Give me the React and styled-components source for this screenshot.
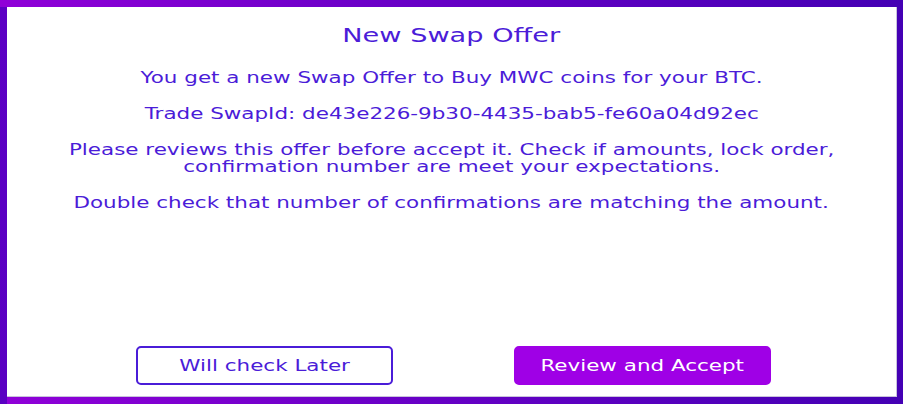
import React from "react";
import styled, { createGlobalStyle } from "styled-components";

const GlobalStyle = createGlobalStyle`
  html, body {
    margin: 0;
    padding: 0;
    width: 903px;
    height: 404px;
    overflow: hidden;
  }
  body {
    font-family: "DejaVu Sans", "Liberation Sans", sans-serif;
  }
`;

export default function App() {
  return (
    <>
      <GlobalStyle />
      <Frame>
        <Panel>
          <Content>
            <Title>
              <Wide>New Swap Offer</Wide>
            </Title>
            <Message>
              <Wide>You get a new Swap Offer to Buy MWC coins for your BTC.</Wide>
            </Message>
            <Message>
              <Wide>Trade SwapId: de43e226-9b30-4435-bab5-fe60a04d92ec</Wide>
            </Message>
            <Message>
              <Wide>
                Please reviews this offer before accept it. Check if amounts, lock order,
                <br />
                confirmation number are meet your expectations.
              </Wide>
            </Message>
            <Message>
              <Wide>Double check that number of confirmations are matching the amount.</Wide>
            </Message>
          </Content>
          <Actions>
            <Button>
              <Wide>Will check Later</Wide>
            </Button>
            <Button primary>
              <Wide>Review and Accept</Wide>
            </Button>
          </Actions>
        </Panel>
      </Frame>
    </>
  );
}

const Frame = styled.div`
  width: 903px;
  height: 404px;
  box-sizing: border-box;
  padding: 7px 6px 7px 7px;
  background:
    linear-gradient(#5c00c4, #5a00c2) 0 7px / 7px calc(100% - 7px) no-repeat,
    linear-gradient(to right, #9000d8 0%, #6c00c8 40%, #4400b4 100%);
  display: flex;
`;

const Panel = styled.div`
  flex: 1;
  background: #ffffff;
  border-right: 1px solid #c9c2dc;
  border-bottom: 1px solid #c9c2dc;
  display: flex;
  flex-direction: column;
  align-items: center;
`;

const Content = styled.div`
  flex: 1;
  display: flex;
  flex-direction: column;
  align-items: center;
  color: #4b1cd8;
  text-align: center;
`;

// the source app renders its text horizontally stretched
const Wide = styled.span`
  display: inline-block;
  transform: scaleX(1.43);
  transform-origin: center;
  white-space: nowrap;
`;

const Title = styled.h1`
  margin: 17px 0 23px;
  font-size: 19px;
  font-weight: normal;
  line-height: 1.2;
`;

const Message = styled.p`
  margin: 0 0 18.5px;
  font-size: 15px;
  line-height: 17.5px;
`;

const Actions = styled.div`
  display: flex;
  justify-content: center;
  gap: 121px;
  padding: 0 0 11px 4px;
`;

const Button = styled.button`
  width: 257px;
  height: 39px;
  box-sizing: border-box;
  border-radius: 5px;
  font-family: "DejaVu Sans", "Liberation Sans", sans-serif;
  font-size: 15px;
  cursor: pointer;
  border: 2px solid ${(p) => (p.primary ? "#9f00e6" : "#4a1cd8")};
  background: ${(p) => (p.primary ? "#9f00e6" : "#ffffff")};
  color: ${(p) => (p.primary ? "#ffffff" : "#4a1cd8")};
`;
